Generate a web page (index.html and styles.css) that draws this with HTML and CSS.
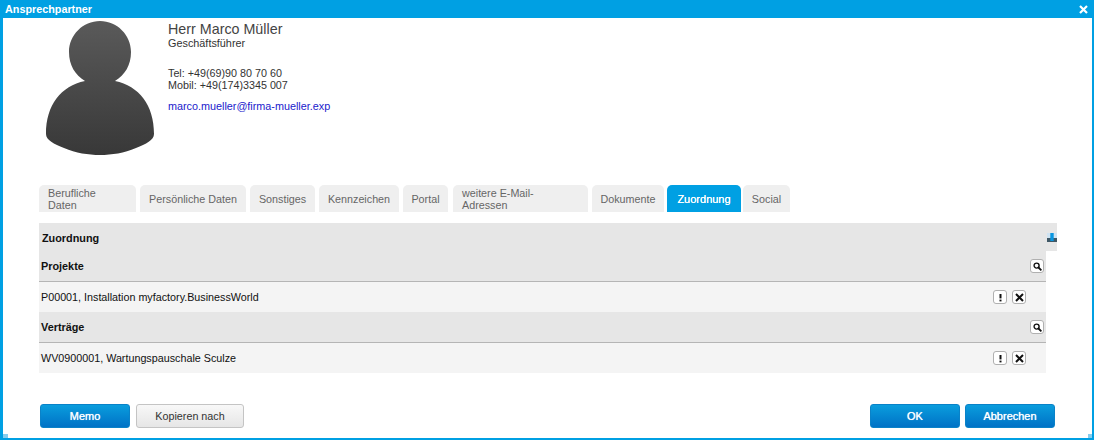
FILE: index.html
```html
<!DOCTYPE html>
<html lang="de">
<head>
<meta charset="utf-8">
<title>Ansprechpartner</title>
<link rel="stylesheet" href="styles.css">
</head>
<body>
<div class="dialog">
  <header class="titlebar">
    <span class="title">Ansprechpartner</span>
    <svg class="close" width="9" height="9" viewBox="0 0 9 9"><path d="M1 1l7 7M8 1l-7 7" stroke="#fff" stroke-width="2.2"/></svg>
  </header>
  <section class="contact">
    <svg class="photo" width="108" height="135" viewBox="0 0 108 135">
      <defs>
        <linearGradient id="pg" x1="0" y1="0" x2="0" y2="1"><stop offset="0" stop-color="#5a5a5a"/><stop offset="1" stop-color="#383838"/></linearGradient>
      </defs>
      <path fill="url(#pg)" d="M54 0C71 0 85 14 85 31C85 44 79 54 69 60C93 65 108 84 108 113C108 119 100 123 90 127C78 132 66 134 54 134C42 134 30 132 18 127C8 123 0 119 0 113C0 84 15 65 39 60C29 54 23 44 23 31C23 14 37 0 54 0Z"/>
    </svg>
    <div class="info">
      <div class="name">Herr Marco Müller</div>
      <div class="role">Geschäftsführer</div>
      <div class="phones">Tel: +49(69)90 80 70 60<br>Mobil: +49(174)3345 007</div>
      <a class="mail" href="#">marco.mueller@firma-mueller.exp</a>
    </div>
  </section>
  <nav class="tabs">
    <span class="tab tab-a two">Berufliche Daten</span>
    <span class="tab tab-b">Persönliche Daten</span>
    <span class="tab tab-c">Sonstiges</span>
    <span class="tab tab-d">Kennzeichen</span>
    <span class="tab tab-e">Portal</span>
    <span class="tab tab-f two">weitere E-Mail-Adressen</span>
    <span class="tab tab-g">Dokumente</span>
    <span class="tab tab-h active">Zuordnung</span>
    <span class="tab tab-i">Social</span>
  </nav>
  <main class="panel">
    <div class="panel-head">
      <span class="bold">Zuordnung</span>
      <svg class="export" width="10" height="10" viewBox="0 0 10 10"><rect x="0" y="0" width="10" height="5" fill="#cfe3f2"/><rect x="0" y="5" width="10" height="4" fill="#3f5866"/><path d="M5 0v8" stroke="#0a96e0" stroke-width="3.4"/></svg>
    </div>
    <div class="list">
      <div class="group"><span class="bold">Projekte</span><button class="ico"><svg width="9" height="9" viewBox="0 0 9 9"><circle cx="3.6" cy="3.6" r="2.5" fill="none" stroke="#111" stroke-width="1.4"/><path d="M5.5 5.5L8.4 8.4" stroke="#111" stroke-width="1.8"/></svg></button></div>
      <div class="row"><span>P00001, Installation myfactory.BusinessWorld</span>
        <div class="actions">
          <button class="ico"><svg width="9" height="9" viewBox="0 0 9 9"><path d="M4.5 1v4.4" stroke="#111" stroke-width="2"/><path d="M4.5 6.6v1.8" stroke="#111" stroke-width="2"/></svg></button>
          <button class="ico"><svg width="9" height="9" viewBox="0 0 9 9"><path d="M1 1l7 7M8 1l-7 7" stroke="#111" stroke-width="2"/></svg></button>
        </div>
      </div>
      <div class="group"><span class="bold">Verträge</span><button class="ico"><svg width="9" height="9" viewBox="0 0 9 9"><circle cx="3.6" cy="3.6" r="2.5" fill="none" stroke="#111" stroke-width="1.4"/><path d="M5.5 5.5L8.4 8.4" stroke="#111" stroke-width="1.8"/></svg></button></div>
      <div class="row"><span>WV0900001, Wartungspauschale Sculze</span>
        <div class="actions">
          <button class="ico"><svg width="9" height="9" viewBox="0 0 9 9"><path d="M4.5 1v4.4" stroke="#111" stroke-width="2"/><path d="M4.5 6.6v1.8" stroke="#111" stroke-width="2"/></svg></button>
          <button class="ico"><svg width="9" height="9" viewBox="0 0 9 9"><path d="M1 1l7 7M8 1l-7 7" stroke="#111" stroke-width="2"/></svg></button>
        </div>
      </div>
    </div>
  </main>
  <footer class="footer">
    <div class="btns-left">
      <button class="btn primary">Memo</button>
      <button class="btn secondary">Kopieren nach</button>
    </div>
    <div class="btns-right">
      <button class="btn primary">OK</button>
      <button class="btn primary">Abbrechen</button>
    </div>
  </footer>
  <span class="grip grip-left"></span>
  <span class="grip grip-right"></span>
</div>
</body>
</html>
```

FILE: styles.css
```css
* { box-sizing: border-box; }
html, body { margin: 0; padding: 0; background: #fff; }
body { font-family: "Liberation Sans", Arial, sans-serif; font-size: 11px; color: #222; }
.dialog { position: relative; width: 1094px; height: 440px; display: flex; flex-direction: column; background: #fff; border: solid #00a0e3; border-width: 0 2px 2px 3px; overflow: hidden; }
.grip { position: absolute; bottom: 0; height: 4px; background: #87cdee; }
.grip-left { left: 0; width: 5px; }
.grip-right { right: 0; width: 4px; }
.titlebar { height: 18px; flex: none; margin: 0 -2px 0 -3px; padding: 0 6px 0 5px; background: #00a0e3; display: flex; align-items: center; justify-content: space-between; color: #fff; font-weight: bold; font-size: 10.8px; }
.contact { height: 167px; flex: none; display: flex; padding: 3px 0 0 43px; }
.photo { flex: none; }
.info { margin-left: 14px; display: flex; flex-direction: column; align-items: flex-start; }
.name { font-size: 14.3px; line-height: 16px; color: #444; }
.role { font-size: 10.85px; line-height: 13px; color: #333; }
.phones { font-size: 10.75px; line-height: 12px; color: #333; margin-top: 17px; }
.mail { font-size: 10.8px; line-height: 13px; color: #1a1acc; text-decoration: none; margin-top: 9px; }
.tabs { display: flex; align-items: stretch; height: 27px; flex: none; margin-left: 36px; gap: 4px; }
.tab { background: #efefef; border-radius: 5px 5px 0 0; color: #666; font-size: 10.75px; line-height: 12px; display: flex; align-items: center; justify-content: center; padding: 0 8px; text-align: left; white-space: nowrap; }
.tab.two { justify-content: flex-start; white-space: normal; padding: 0 9px; }
.tab-a { width: 97px; }
.tab-b { width: 106px; }
.tab-c { width: 65px; }
.tab-d { width: 80px; }
.tab-e { width: 45px; }
.tab-f { width: 135px; margin-left: 1px; }
.tab-g { width: 72px; }
.tab-h { width: 74px; margin-left: -1px; }
.tab-i { width: 47px; margin-left: -2px; }
.tab.active { background: #00a0e3; color: #fff; font-size: 11px; text-shadow: 0 0 0.6px #fff; }
.panel { flex: none; margin: 11px 0 0 36px; width: 1018px; }
.panel-head { height: 28px; background: #e6e6e6; display: flex; align-items: center; justify-content: space-between; padding: 2px 0 0 3px; }
.bold { font-weight: bold; color: #111; font-size: 10.85px; }
.export { flex: none; }
.list { width: 1007px; }
.group { height: 31px; background: #e6e6e6; border-bottom: 1px solid #b5b5b5; display: flex; align-items: center; justify-content: space-between; padding: 0 2px 0 2px; }
.row { height: 30px; background: #f4f4f4; display: flex; align-items: center; justify-content: space-between; padding: 0 20px 0 2px; color: #111; font-size: 10.75px; }
.actions { display: flex; gap: 5px; }
.ico { width: 14px; height: 14px; padding: 0; display: flex; align-items: center; justify-content: center; background: #fff; border: 1px solid #b0b0b0; border-radius: 3px; }
.footer { flex: none; display: flex; justify-content: space-between; margin-top: 31px; padding: 0 37px; }
.btns-left { display: flex; gap: 6px; }
.btns-right { display: flex; gap: 5px; }
.btn { height: 24px; border-radius: 3px; font-family: inherit; font-size: 11px; padding: 0; width: 90px; }
.primary { background: linear-gradient(#0a9ddd, #0072c6); border: 1px solid #0a82c8; color: #fff; text-shadow: 0 0 0.7px #fff; }
.secondary { width: 108px; background: linear-gradient(#f8f8f8, #e6e6e6); border: 1px solid #c4c4c4; color: #333; font-size: 10.75px; }
```
